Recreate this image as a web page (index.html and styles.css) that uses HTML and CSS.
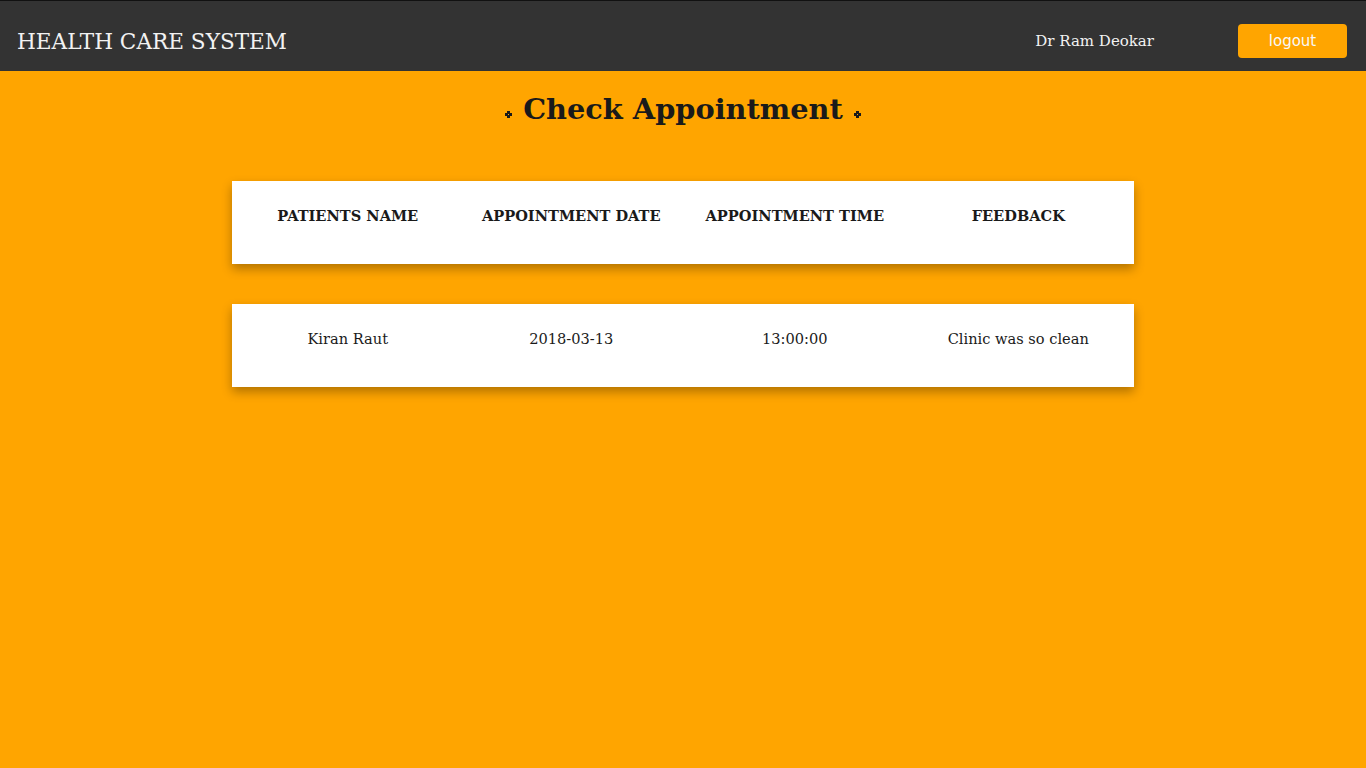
FILE: index.html
```
<!DOCTYPE html>
<html>
<head>
<meta charset="utf-8">
<title>Check Appointment</title>
<link rel="stylesheet" href="styles.css">
</head>
<body>
<header class="navbar">
  <div class="brand">HEALTH CARE SYSTEM</div>
  <div class="nav-right">
    <span class="user">Dr Ram Deokar</span>
    <button class="logout">logout</button>
  </div>
</header>
<main class="content">
  <h1 class="title">
    <svg class="deco" width="9" height="9" viewBox="0 0 9 9"><path d="M3 1h3v2h2v3h-2v2h-3v-2h-2v-3h2z" fill="#1a1a1a"/><rect x="4" y="4" width="1" height="1" fill="#ffa500"/></svg>
    <span>Check Appointment</span>
    <svg class="deco" width="9" height="9" viewBox="0 0 9 9"><path d="M3 1h3v2h2v3h-2v2h-3v-2h-2v-3h2z" fill="#1a1a1a"/><rect x="4" y="4" width="1" height="1" fill="#ffa500"/></svg>
  </h1>
  <div class="card">
    <div class="cell head">PATIENTS NAME</div>
    <div class="cell head">APPOINTMENT DATE</div>
    <div class="cell head">APPOINTMENT TIME</div>
    <div class="cell head">FEEDBACK</div>
  </div>
  <div class="card">
    <div class="cell">Kiran Raut</div>
    <div class="cell">2018-03-13</div>
    <div class="cell">13:00:00</div>
    <div class="cell">Clinic was so clean</div>
  </div>
</main>
</body>
</html>
```
FILE: styles.css
```
html, body {
  margin: 0;
  padding: 0;
}
body {
  background: #ffa500;
  font-family: "DejaVu Serif", serif;
  color: #1a1a1a;
  min-height: 768px;
}
.navbar {
  background: #333333;
  border-top: 1px solid #111;
  height: 71px;
  box-sizing: border-box;
  display: flex;
  align-items: center;
  justify-content: space-between;
  padding: 10px 19px 0 17px;
}
.brand {
  color: #f2f2f2;
  font-size: 21.6px;
}
.nav-right {
  display: flex;
  align-items: center;
}
.user {
  color: #f2f2f2;
  font-size: 15px;
  margin-right: 84px;
}
.logout {
  background: #ffa500;
  color: #f8f8f8;
  border: none;
  border-radius: 4px;
  width: 109px;
  height: 34px;
  font-family: "DejaVu Sans", sans-serif;
  font-size: 15px;
  padding: 0;
}
.content {
  display: flex;
  flex-direction: column;
  align-items: center;
}
.title {
  margin: 20px 0 54px;
  font-size: 28.8px;
  font-weight: bold;
  display: flex;
  align-items: center;
  gap: 10px;
  line-height: 36px;
}
.deco {
  margin-top: 10px;
}
.card {
  background: #fff;
  width: 902px;
  height: 83px;
  box-sizing: border-box;
  padding: 0 4px;
  display: grid;
  grid-template-columns: repeat(4, 1fr);
  box-shadow: 0 5px 10px rgba(0, 0, 0, 0.3);
  margin-bottom: 40px;
}
.cell {
  text-align: center;
  font-size: 14.6px;
  padding-top: 26px;
}
.cell.head {
  font-weight: bold;
}
```
